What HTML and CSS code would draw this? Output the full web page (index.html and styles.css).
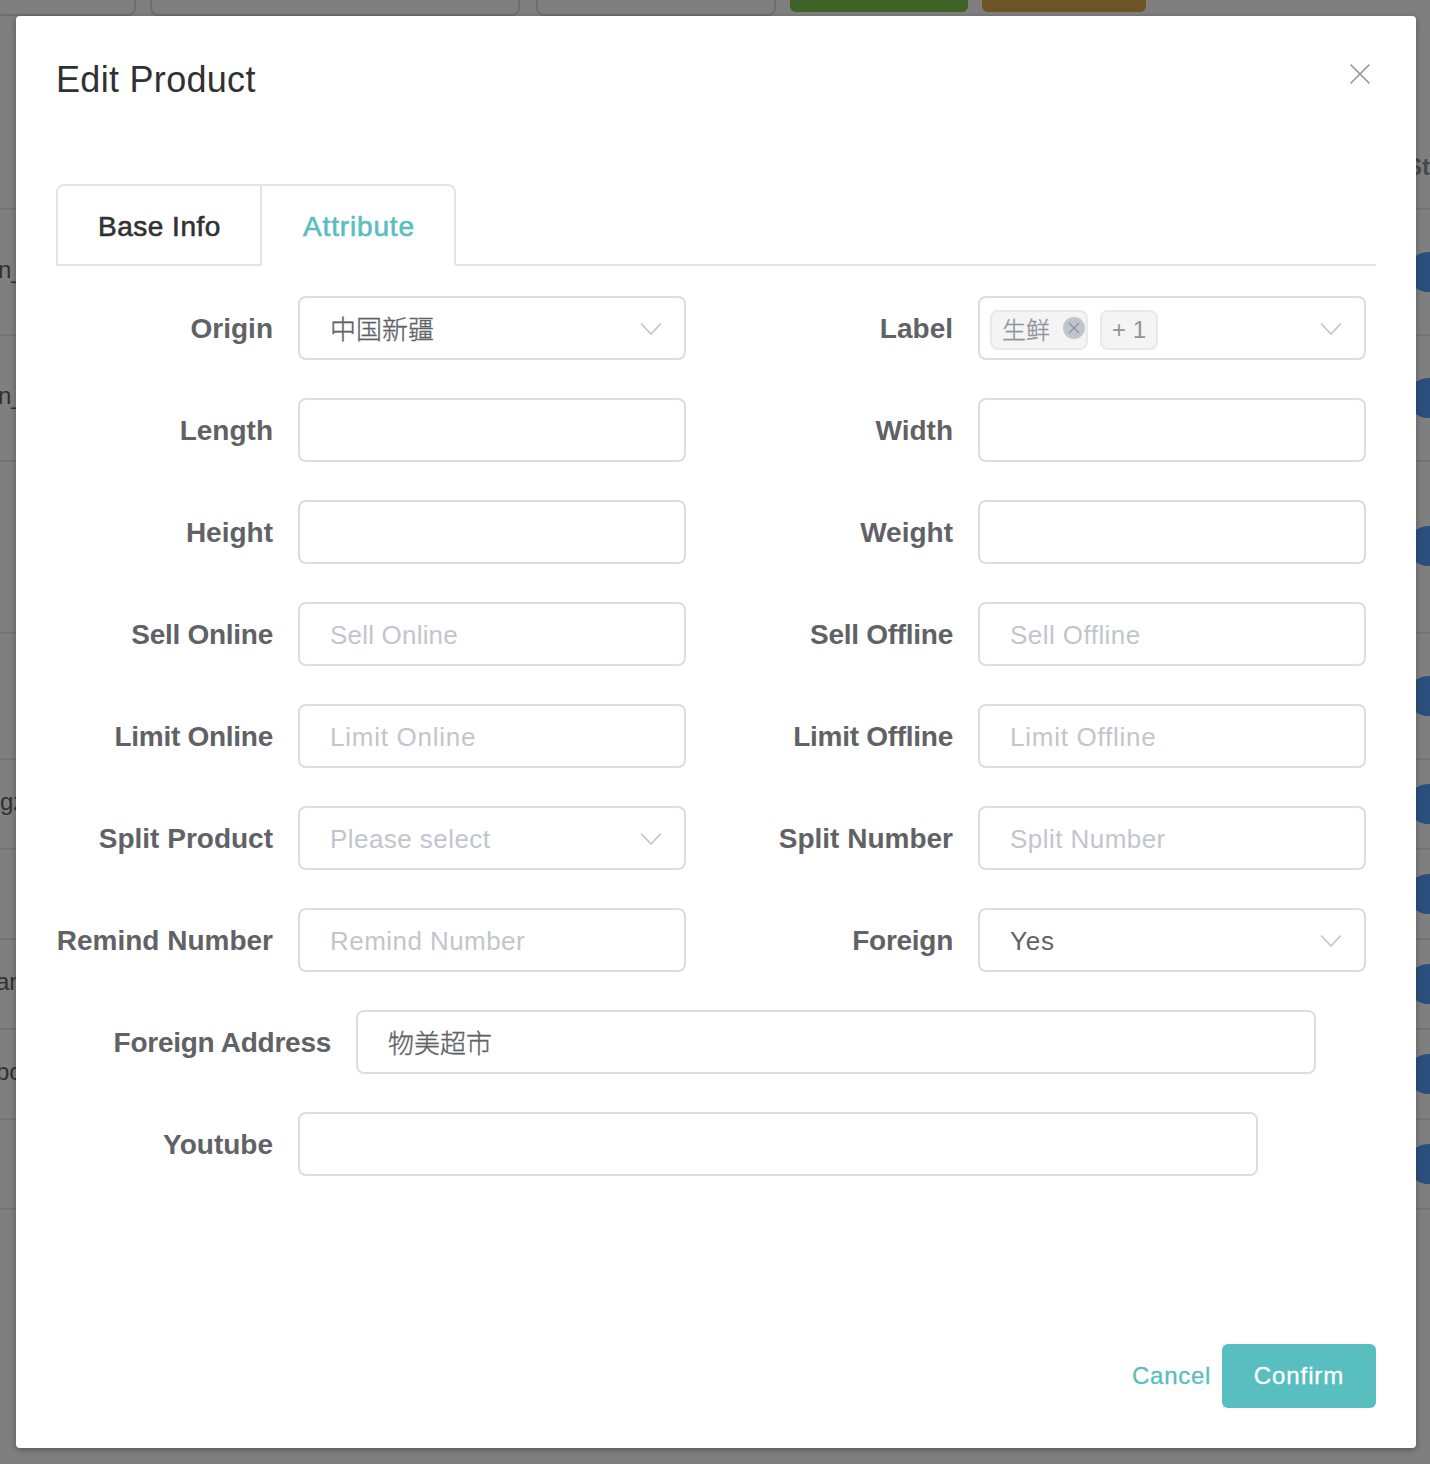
FILE: index.html
```html
<!DOCTYPE html>
<html lang="en">
<head>
<meta charset="utf-8">
<title>Edit Product</title>
<link rel="stylesheet" href="styles.css">
</head>
<body>
<div class="page" aria-hidden="true">
  <div class="toolbar">
    <div class="filter filter-first"></div>
    <div class="filter filter-wide"></div>
    <div class="filter filter-mid"></div>
    <div class="action action-green"></div>
    <div class="action action-orange"></div>
  </div>
  <div class="row row-head"><span></span><b>St</b></div>
  <div class="row row-m"><span class="nudge">n_</span><i class="switch"></i></div>
  <div class="row row-m"><span class="nudge">n_</span><i class="switch"></i></div>
  <div class="row row-l"><span></span><i class="switch"></i></div>
  <div class="row row-m"><span></span><i class="switch"></i></div>
  <div class="row"><span>gz</span><i class="switch"></i></div>
  <div class="row"><span></span><i class="switch"></i></div>
  <div class="row"><span class="nudge-more">an</span><i class="switch"></i></div>
  <div class="row"><span class="nudge-more">bc</span><i class="switch"></i></div>
  <div class="row"><span></span><i class="switch"></i></div>
</div>

<div class="overlay">
  <section class="dialog" role="dialog" aria-label="Edit Product">
    <header class="dialog-header">
      <h1 class="title">Edit Product</h1>
      <svg class="close" viewBox="0 0 20 20"><path d="M1 1 19 19M19 1 1 19"/></svg>
    </header>

    <nav class="tabs">
      <a class="tab tab-first">Base Info</a>
      <a class="tab tab-active">Attribute</a>
      <span class="tabs-rest"></span>
    </nav>

    <form class="form">
      <div class="item"><label class="label">Origin</label>
        <div class="field select"><span class="cjk">中国新疆</span><svg class="chevron" viewBox="0 0 22 12"><path d="M1.5 1 11 11 20.5 1"/></svg></div></div>
      <div class="item"><label class="label">Label</label>
        <div class="field select multi">
          <span class="tag tag-closable"><span class="tag-text">生鲜</span><svg class="tag-close" viewBox="0 0 22 22"><circle cx="11" cy="11" r="11"/><path d="M6 6 16 16M16 6 6 16"/></svg></span>
          <span class="tag tag-count">+ 1</span>
          <svg class="chevron" viewBox="0 0 22 12"><path d="M1.5 1 11 11 20.5 1"/></svg></div></div>

      <div class="item"><label class="label">Length</label><input class="field"></div>
      <div class="item"><label class="label">Width</label><input class="field"></div>
      <div class="item"><label class="label">Height</label><input class="field"></div>
      <div class="item"><label class="label">Weight</label><input class="field"></div>
      <div class="item"><label class="label label-tight">Sell Online</label><input class="field field-tight" placeholder="Sell Online"></div>
      <div class="item"><label class="label label-tight">Sell Offline</label><input class="field" placeholder="Sell Offline"></div>
      <div class="item"><label class="label label-tight">Limit Online</label><input class="field field-loose" placeholder="Limit Online"></div>
      <div class="item"><label class="label label-tight">Limit Offline</label><input class="field field-loose" placeholder="Limit Offline"></div>
      <div class="item"><label class="label">Split Product</label>
        <div class="field select"><span class="hint">Please select</span><svg class="chevron" viewBox="0 0 22 12"><path d="M1.5 1 11 11 20.5 1"/></svg></div></div>
      <div class="item"><label class="label">Split Number</label><input class="field" placeholder="Split Number"></div>
      <div class="item"><label class="label">Remind Number</label><input class="field" placeholder="Remind Number"></div>
      <div class="item"><label class="label label-tight">Foreign</label>
        <div class="field select field-loose"><span>Yes</span><svg class="chevron" viewBox="0 0 22 12"><path d="M1.5 1 11 11 20.5 1"/></svg></div></div>

      <div class="item item-full item-address"><label class="label label-tight">Foreign Address</label><div class="field"><span class="cjk">物美超市</span></div></div>
      <div class="item item-full"><label class="label">Youtube</label><input class="field"></div>
    </form>

    <footer class="dialog-footer">
      <button class="btn btn-text">Cancel</button>
      <button class="btn btn-primary">Confirm</button>
    </footer>
  </section>
</div>
</body>
</html>
```

FILE: styles.css
```css
* { box-sizing: border-box; }

body {
  margin: 0;
  height: 1464px;
  overflow: hidden;
  position: relative;
  background: #fff;
  font-family: "Liberation Sans", "Noto Sans CJK SC", sans-serif;
  color: #606266;
}

/* Product list behind the dialog */
.toolbar {
  display: flex;
  align-items: flex-start;
  height: 126px;
}
.filter {
  height: 16px;
  margin-right: 16px;
  border: 2px solid #dcdce4;
  border-top: 0;
  border-radius: 0 0 8px 8px;
}
.filter-first { width: 136px; margin-right: 14px; border-left: 0; border-bottom-left-radius: 0; }
.filter-wide { width: 370px; }
.filter-mid { width: 240px; margin-right: 14px; }
.action { height: 12px; border-radius: 0 0 6px 6px; }
.action-green { width: 178px; margin-right: 14px; background: #7cc44e; }
.action-orange { width: 164px; background: #dca64e; }

.row {
  display: flex;
  align-items: center;
  justify-content: space-between;
  height: 90px;
  border-bottom: 2px solid #ebebf2;
  font-size: 24px;
}
.row span { padding-bottom: 4px; }
.row-head { height: 84px; }
.row-head b { color: #909399; }
.row-m { height: 126px; }
.row-l { height: 172px; }
.nudge { margin-left: -2px; }
.nudge-more { margin-left: -4px; }
.switch {
  width: 22px;
  height: 40px;
  border-radius: 20px 0 0 20px;
  background: #549ffa;
}
.row-l .switch { margin-bottom: 2px; }

/* Dialog */
.overlay {
  position: absolute;
  inset: 0;
  padding: 16px 14px 16px 16px;
  background: rgba(0, 0, 0, .5);
}
.dialog {
  display: flex;
  flex-direction: column;
  height: 1432px;
  padding: 0 40px 40px;
  border-radius: 4px;
  background: #fff;
  box-shadow: 0 2px 6px rgba(0, 0, 0, .3);
}
.dialog-header {
  display: flex;
  justify-content: space-between;
  height: 168px;
  padding: 40px 6px 0 0;
}
.title {
  margin: 0;
  color: #303133;
  font-size: 36px;
  font-weight: 400;
  line-height: 48px;
  letter-spacing: .3px;
}
.close { width: 20px; height: 20px; margin-top: 8px; }
.close path { fill: none; stroke: #909399; stroke-width: 1.6; stroke-linecap: round; }

.tabs { display: flex; height: 82px; font-size: 28px; line-height: 81px; }
.tab {
  padding-left: 40px;
  border: 2px solid #e4e4ea;
  color: #303133;
  -webkit-text-stroke: .6px currentColor;
}
.tab-first { width: 206px; border-top-left-radius: 8px; letter-spacing: .5px; }
.tab-active {
  width: 194px;
  padding-left: 41px;
  border-left: 0;
  border-bottom-color: transparent;
  border-top-right-radius: 8px;
  color: #58bec0;
  letter-spacing: .85px;
}
.tabs-rest { flex: 1; border-bottom: 2px solid #e4e4ea; }

.form {
  display: grid;
  grid-template-columns: 680px 680px;
  row-gap: 38px;
  margin-right: -40px;
  padding-top: 30px;
}
.item { display: flex; height: 64px; }
.item-full { grid-column: 1 / -1; }
.item-address .label { width: 300px; }
.label {
  width: 242px;
  padding-right: 25px;
  font-size: 28px;
  font-weight: 700;
  line-height: 66px;
  text-align: right;
  white-space: nowrap;
}
.label-tight { letter-spacing: -.27px; }
.field {
  display: flex;
  align-items: center;
  width: 388px;
  height: 64px;
  padding: 2px 30px 0;
  border: 2px solid #dcdce4;
  border-radius: 8px;
  background: #fff;
  color: #606266;
  font-family: inherit;
  font-size: 26px;
  letter-spacing: .45px;
}
.field-tight { letter-spacing: .2px; }
.field-loose { letter-spacing: .75px; }
.item-full .field { width: 960px; }
.field::placeholder, .hint { color: #c3c5cd; opacity: 1; }
.select { justify-content: space-between; padding-right: 22px; }
.chevron { width: 22px; height: 12px; }
.chevron path { fill: none; stroke: #c0c4cc; stroke-width: 1.6; stroke-linecap: round; }
.cjk {
  padding-bottom: 4px;
  font-weight: 300;
  letter-spacing: 0;
  -webkit-text-stroke: .35px currentColor;
}

.multi { justify-content: flex-start; padding-left: 10px; }
.multi .chevron { margin-left: auto; }
.tag {
  display: flex;
  align-items: center;
  height: 40px;
  margin: 2px 12px 0 0;
  border: 2px solid #e9e9eb;
  border-radius: 8px;
  background: #f4f4f5;
  color: #909399;
  font-size: 24px;
}
.tag-closable { justify-content: space-between; width: 98px; padding: 0 1px 0 10px; }
.tag-text {
  padding-bottom: 4px;
  font-weight: 300;
  letter-spacing: 0;
  -webkit-text-stroke: .35px currentColor;
}
.tag-count { width: 58px; padding-left: 10px; letter-spacing: 0; }
.tag-close { width: 22px; height: 22px; margin-bottom: 4px; }
.tag-close circle { fill: #c0c4cc; }
.tag-close path { stroke: #909399; stroke-width: 1.3; }

.dialog-footer { display: flex; justify-content: flex-end; margin-top: auto; }
.btn {
  height: 64px;
  padding: 0;
  border: 0;
  border-radius: 6px;
  font-family: inherit;
  font-size: 24px;
  -webkit-text-stroke: .3px currentColor;
}
.btn-text { margin-right: 11px; background: none; color: #58bec0; letter-spacing: .7px; }
.btn-primary { width: 154px; background: #58bec0; color: #fff; letter-spacing: .9px; }
```
